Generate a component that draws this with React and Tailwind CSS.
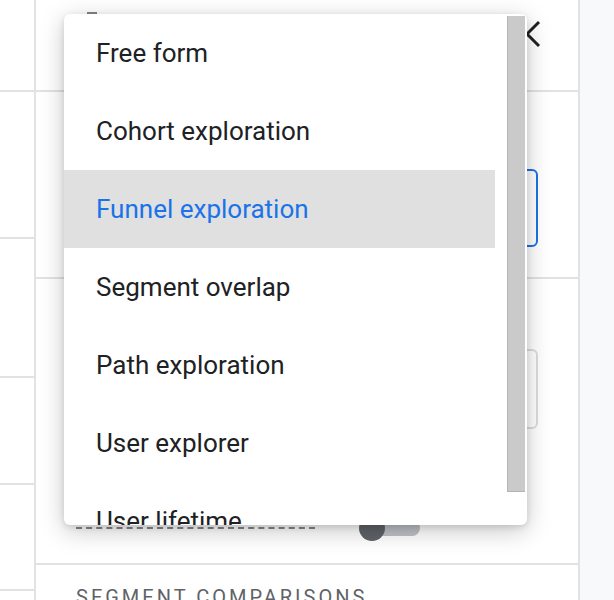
import React from 'react';

const techniques = [
  'Free form',
  'Cohort exploration',
  'Funnel exploration',
  'Segment overlap',
  'Path exploration',
  'User explorer',
  'User lifetime',
];

const font = { fontFamily: 'Roboto, "Noto Sans", Arial, sans-serif' };

const CloseIcon = () => (
  <svg width="28" height="28" viewBox="0 0 28 28" fill="none" stroke="#202124" strokeWidth="3">
    <path d="M2 2 L26 26 M26 2 L2 26" />
  </svg>
);

const TechniqueMenu = ({ selected }) => (
  <div className="absolute left-[64px] top-[14px] w-[463px] h-[511px] bg-white rounded-[6px] shadow-[0_6px_24px_rgba(0,0,0,0.22),0_2px_6px_rgba(0,0,0,0.12)] overflow-hidden">
    <ul className="w-[431px]">
      {techniques.map((name) => (
        <li
          key={name}
          className={`h-[78px] flex items-center pl-[32px] text-[26px] ${
            name === selected ? 'bg-[#e0e0e0] text-[#1a73e8]' : 'text-[#202124]'
          }`}
        >
          {name}
        </li>
      ))}
    </ul>
    {/* scroll thumb */}
    <div className="absolute right-[2px] top-[2px] w-[18px] h-[476px] bg-[#cacaca] border-l border-b border-[#b4b4b4]" />
  </div>
);

export default function App() {
  return (
    <div className="relative w-[614px] h-[600px] overflow-hidden bg-white flex" style={font}>
      {/* left rail */}
      <div className="w-[36px] shrink-0 border-r-2 border-[#e2e2e2] flex flex-col">
        <div className="h-[92px] shrink-0 border-b-2 border-[#e2e2e2]" />
        <div className="h-[147px] shrink-0 border-b-2 border-[#e2e2e2]" />
        <div className="h-[139px] shrink-0 border-b-2 border-[#e2e2e2]" />
        <div className="h-[107px] shrink-0 border-b-2 border-[#e2e2e2]" />
        <div className="h-[106px] shrink-0 border-b-2 border-[#e2e2e2]" />
      </div>

      {/* settings panel */}
      <div className="w-[544px] shrink-0 border-r-2 border-[#e2e2e2] flex flex-col">
        <div className="h-[92px] shrink-0 border-b-2 border-[#e2e2e2] flex justify-end items-start pt-[20px] pr-[37px]">
          <CloseIcon />
        </div>
        <div className="h-[187px] shrink-0 border-b-2 border-[#e2e2e2] pl-[40px] pr-[40px] pt-[77px]">
          <div className="h-[78px] rounded-[6px] border-2 border-[#1a73e8]" />
        </div>
        <div className="h-[286px] shrink-0 border-b-2 border-[#e2e2e2] pl-[40px] pr-[40px] pt-[70px] flex flex-col">
          <div className="h-[80px] rounded-[6px] border-2 border-[#dadce0]" />
          <div className="flex items-center mt-[86px] gap-[44px]">
            <div className="w-[239px] border-t-2 border-dashed border-[#80868b]" />
            <div className="relative w-[61px] h-[26px] flex items-center">
              <div className="absolute left-[14px] w-[47px] h-[16px] rounded-full bg-[#bdc1c6]" />
              <div className="absolute left-0 w-[26px] h-[26px] rounded-full bg-[#5f6368]" />
            </div>
          </div>
        </div>
        <div className="shrink-0 pl-[40px] pt-[20px]">
          <span className="text-[20px] leading-[24px] tracking-[0.15em] text-[#5f6368] uppercase">Segment comparisons</span>
        </div>
      </div>

      {/* right gutter */}
      <div className="flex-1 bg-[#f8f9fa]" />

      <div className="absolute left-[87px] top-[12px] w-[10px] h-[2px] bg-[#80868b]" />
      <TechniqueMenu selected="Funnel exploration" />
    </div>
  );
}
